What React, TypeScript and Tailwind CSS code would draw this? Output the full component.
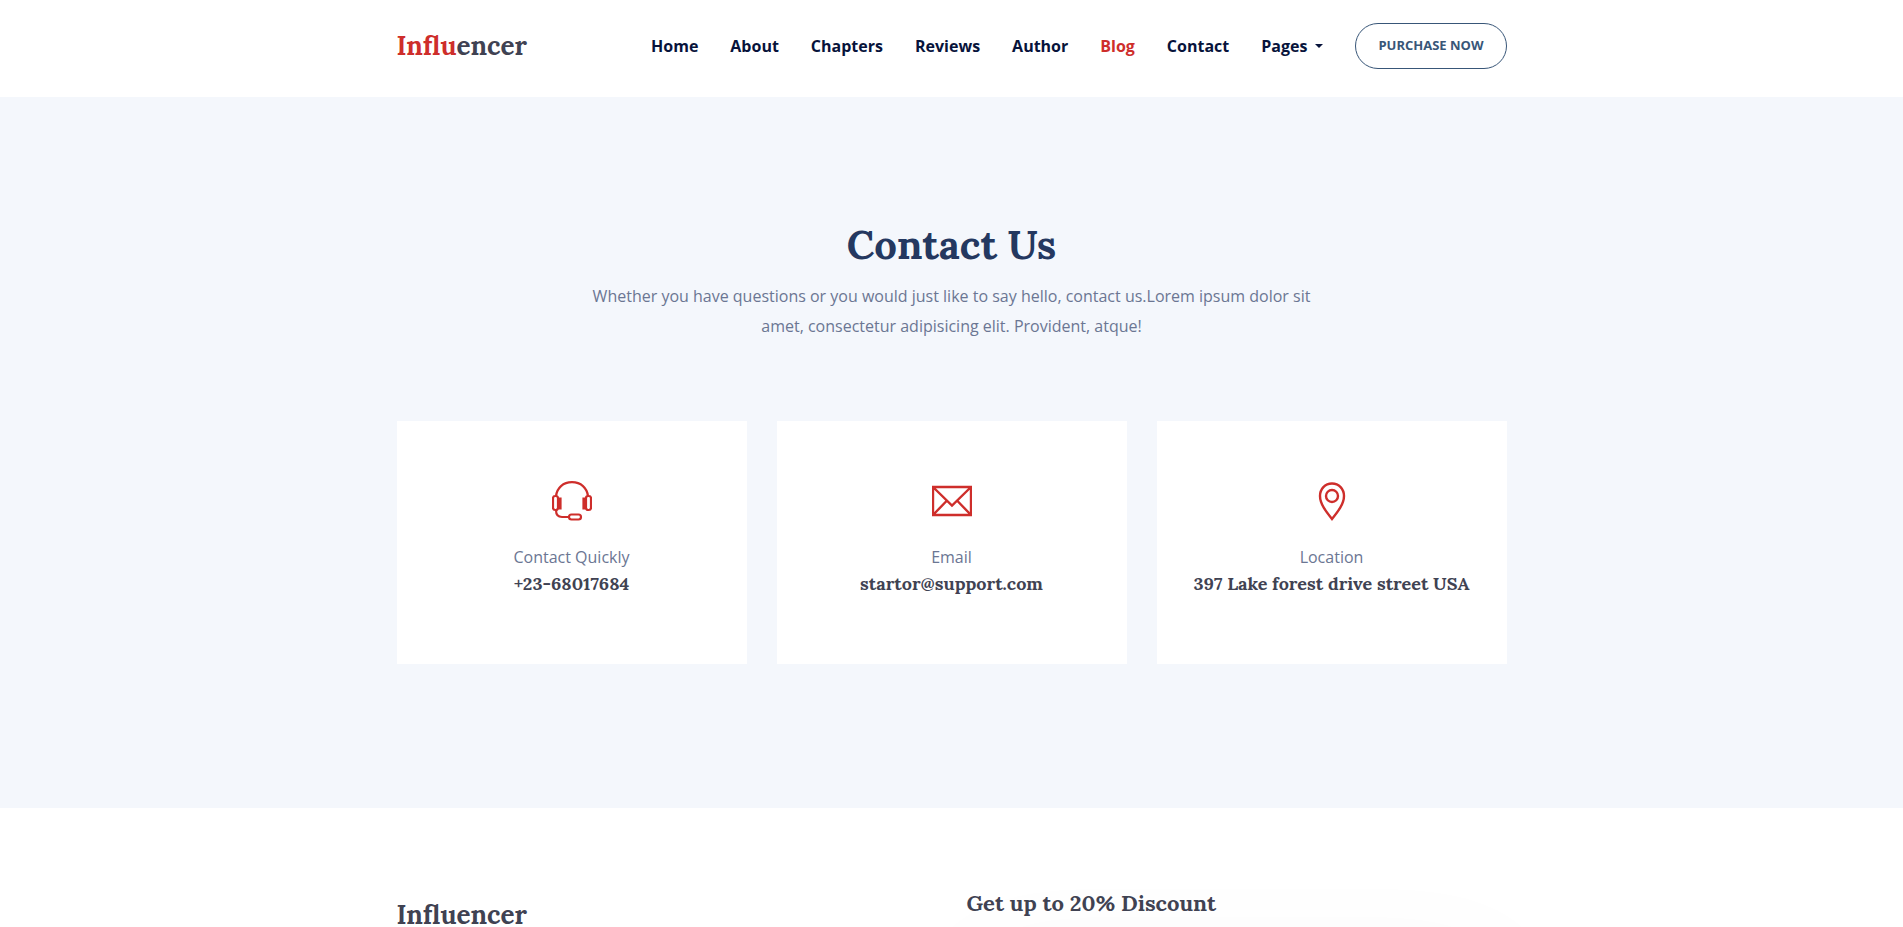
import type { ReactNode } from "react";

const links = ["Home", "About", "Chapters", "Reviews", "Author", "Blog", "Contact"];
const serif = "font-['Lora','Liberation_Serif',serif]";

function HeadsetIcon() {
  return (
    <svg viewBox="0 0 40 40" className="size-10" fill="none" stroke="currentColor" strokeWidth="2.200" aria-hidden="true">
      <path d="M4 15C5 7 11 1.200 20 1.200S35 7 36 15" />
      <rect x="1" y="15" width="5" height="14" rx="2.200" />
      <rect x="34" y="15" width="5" height="14" rx="2.200" />
      <path d="M8 16.500v12M32 16.500v12" strokeWidth="3.200" />
      <path d="M4 29c0 4 2 7 6 7h7" />
      <rect x="17" y="33.500" width="12" height="5" rx="2.500" />
    </svg>
  );
}

function MailIcon() {
  return (
    <svg viewBox="0 0 40 40" className="size-10" fill="none" stroke="currentColor" strokeWidth="2.400" aria-hidden="true">
      <path d="M1 6h38v28H1zM1 6l19 18.500L39 6M1 34l14-14.500M39 34 25 19.500" />
    </svg>
  );
}

function PinIcon() {
  return (
    <svg viewBox="0 0 40 40" className="size-10" fill="none" stroke="currentColor" strokeWidth="2.400" aria-hidden="true">
      <path d="M20 2.500C13 2.500 8 8 8 15c0 8 6 15.500 12 23 6-7.500 12-15 12-23 0-7-5-12.500-12-12.500Z" />
      <circle cx="20" cy="15" r="6" />
    </svg>
  );
}

function ContactCard({ icon, label, value }: { icon: ReactNode; label: string; value: string }) {
  return (
    <article className="flex flex-col items-center bg-white px-4 pt-[60px] pb-[69px] text-center">
      <span className="text-[#ce2e2b]">{icon}</span>
      <p className="mt-[21px] leading-[30px] text-[#6b7693]">{label}</p>
      <h2 className={`${serif} text-lg leading-[23px] font-bold text-[#404252]`}>{value}</h2>
    </article>
  );
}

export default function App() {
  return (
    <div className="flex min-h-screen flex-col overflow-hidden bg-white font-['Open_Sans',sans-serif] text-base">
      <header>
        <div className="mx-auto flex w-full max-w-[1140px] flex-wrap items-center justify-between px-[15px] pt-[23px] pb-7">
          <a href="#" className={`${serif} text-[26px] leading-[46px] font-bold text-[#404252]`}>
            <span className="text-[#ce2e2b]">Influ</span>encer
          </a>
          <nav className="flex flex-wrap items-center gap-8 font-bold text-[#07133b]">
            {links.map((link) => (
              <a key={link} href={`#${link.toLowerCase()}`} className={link === "Blog" ? "text-[#ce2e2b]" : ""}>
                {link}
              </a>
            ))}
            <a href="#pages" className="flex items-center gap-2">
              Pages
              <svg viewBox="0 0 8 4" className="h-1 w-2" fill="currentColor" aria-hidden="true">
                <path d="M0 0h8L4 4z" />
              </svg>
            </a>
            <a
              href="#purchase"
              className="rounded-[23px] border border-[#385678] px-[22px] pb-0.5 text-[13px] leading-[42px] text-[#385678]"
            >
              PURCHASE NOW
            </a>
          </nav>
        </div>
      </header>

      <main className="bg-[#f4f7fc] pt-[120px] pb-36">
        <div className="mx-auto max-w-[1140px] px-[15px]">
          <div className="mx-auto max-w-[730px] text-center">
            <h1 className={`${serif} text-[40px] leading-[56px] font-bold text-[#243860]`}>Contact Us</h1>
            <p className="mt-2 leading-[30px] text-[#6b7693]">
              Whether you have questions or you would just like to say hello, contact us.Lorem ipsum dolor sit amet,
              consectetur adipisicing elit. Provident, atque!
            </p>
          </div>
          <div className="mt-20 grid gap-[30px] md:grid-cols-3">
            <ContactCard icon={<HeadsetIcon />} label="Contact Quickly" value="+23-68017684" />
            <ContactCard icon={<MailIcon />} label="Email" value="startor@support.com" />
            <ContactCard icon={<PinIcon />} label="Location" value="397 Lake forest drive street USA" />
          </div>
        </div>
      </main>

      <footer className="flex-1 overflow-hidden">
        <div className="mx-auto grid max-w-[1140px] grid-cols-2 items-start gap-[30px] px-[15px] pt-[79px]">
          <a href="#" className={`${serif} pt-4 text-[26px] leading-6 font-bold text-[#404252]`}>
            Influencer
          </a>
          <div>
            <h2 className={`${serif} text-[22px] leading-8 font-bold text-[#404252]`}>Get up to 20% Discount</h2>
            <div
              aria-hidden="true"
              className="mt-2 -mb-60 h-60 rounded-lg shadow-[0_30px_120px_rgba(0,0,0,0.03)]"
            />
          </div>
        </div>
      </footer>
    </div>
  );
}
